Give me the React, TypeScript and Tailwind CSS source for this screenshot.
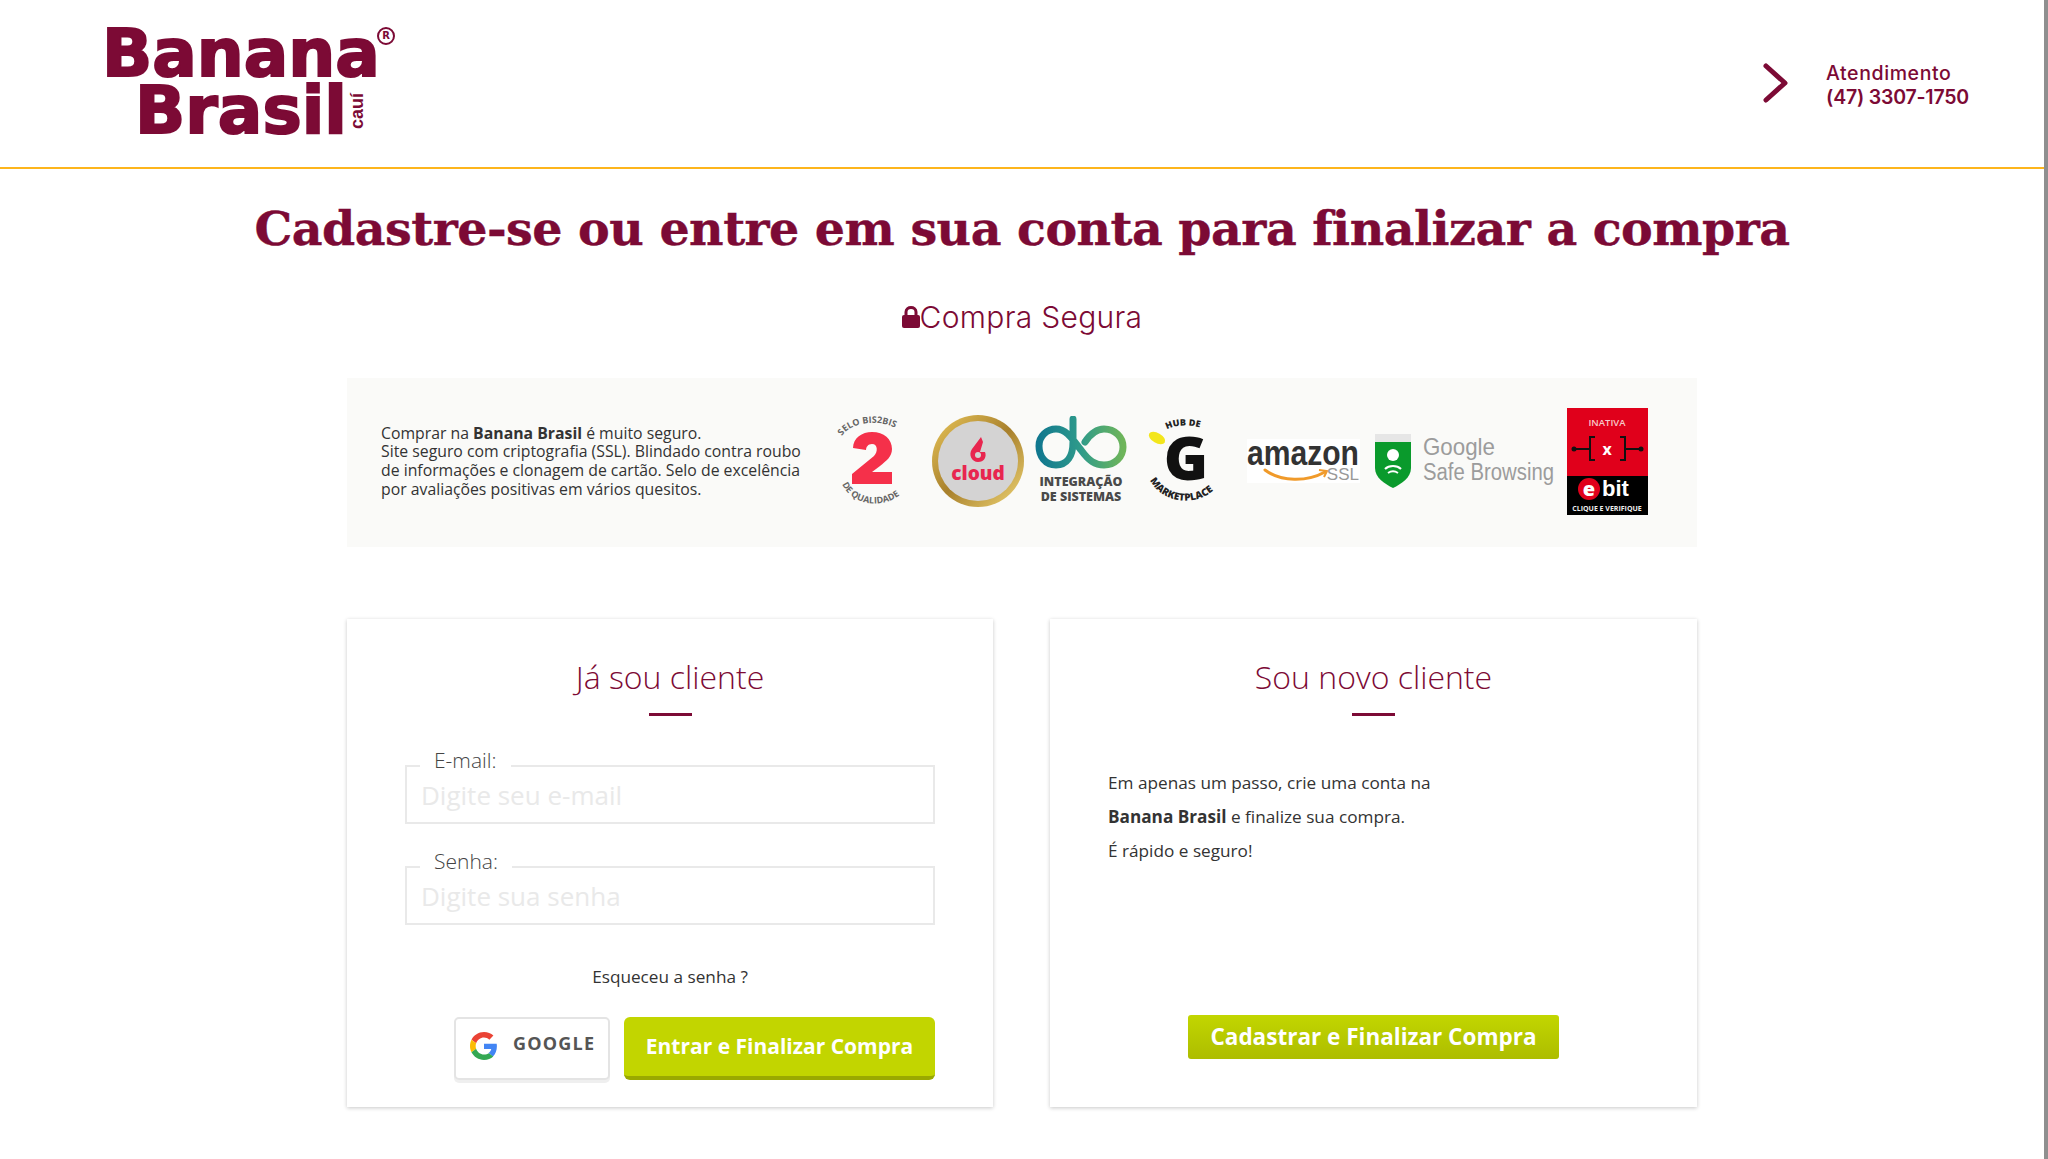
const WINE = "#7c0a35"

const Logo = () => (
  <div className="relative w-[300px] h-[120px] ml-[102px] mt-[25px] text-[#7c0a35] font-['DejaVu_Sans',sans-serif] font-bold [-webkit-text-stroke:2px_#7c0a35]">
    <div className="text-[66px] leading-[57px] whitespace-nowrap">Banana</div>
    <div className="text-[66px] leading-[57px] ml-[33px] whitespace-nowrap">Brasil</div>
    <span className="absolute left-[275px] top-[2px] w-[18px] h-[18px] rounded-full border-2 border-[#7c0a35] flex items-center justify-center text-[10px] leading-none font-bold [-webkit-text-stroke:0px]">R</span>
    <span className="absolute left-[237px] top-[77px] -rotate-90 text-[18px] leading-none font-bold [-webkit-text-stroke:0px] font-['Liberation_Sans',sans-serif]">cauí</span>
  </div>
)

const SeloBadge = () => (
  <svg width="70" height="94" viewBox="0 0 70 94" className="shrink-0 overflow-visible">
    <defs>
      <path id="arcTop" d="M2 22 C12 6 50 2 68 24" />
      <path id="arcBot" d="M2 70 C14 96 54 96 70 70" />
    </defs>
    <text fontSize="9" fontWeight="700" fill="#666" fontFamily="Open Sans, sans-serif"><textPath href="#arcTop">SELO BIS2BIS</textPath></text>
    <path d="M13 34 C13 24 22 18 32 18 C44 18 52 25 52 35 C52 43 46 47 40 52 L32 58 H52 V70 H12 V60 L34 42 C38 38 38 30 32 30 C28 30 26 33 26 36 Z" fill="#f5304a" />
    <text fontSize="9" fontWeight="700" fill="#666" fontFamily="Open Sans, sans-serif"><textPath href="#arcBot">DE QUALIDADE</textPath></text>
  </svg>
)

const CloudBadge = () => (
  <svg width="94" height="92" viewBox="0 0 94 92" className="shrink-0">
    <defs>
      <linearGradient id="gold" x1="0" y1="0" x2="1" y2="1">
        <stop offset="0" stopColor="#e9c65a" />
        <stop offset="0.5" stopColor="#a8802c" />
        <stop offset="1" stopColor="#f0d676" />
      </linearGradient>
    </defs>
    <ellipse cx="47" cy="46" rx="46" ry="46" fill="url(#gold)" />
    <ellipse cx="47" cy="46" rx="40" ry="40" fill="#d4d3d3" />
    <path d="M50 22 L41 34 C37 40 41 47 47 47 C53 47 56 42 54 37 L49 37 L52 27 Z" fill="#e8264f" />
    <circle cx="47" cy="40" r="3" fill="#d4d3d3" />
    <text x="47" y="65" textAnchor="middle" fontSize="19" fontWeight="800" fill="#e8264f" fontFamily="Open Sans, sans-serif">cloud</text>
  </svg>
)

const IntegracaoBadge = () => (
  <svg width="92" height="90" viewBox="0 0 92 90" className="shrink-0">
    <defs>
      <linearGradient id="loop" x1="0" y1="0" x2="1" y2="0">
        <stop offset="0" stopColor="#11788f" />
        <stop offset="0.5" stopColor="#2f9b8a" />
        <stop offset="1" stopColor="#6eb55a" />
      </linearGradient>
    </defs>
    <path d="M38 3 V26 C38 40 32 49 21 49 C10 49 4 40 4 30 C4 20 12 13 21 13 C32 13 38 24 46 34 C54 45 60 49 69 49 C80 49 88 41 88 31 C88 21 80 13 69 13 C60 13 54 20 50 26" fill="none" stroke="url(#loop)" strokeWidth="7" strokeLinecap="round" />
    <text x="46" y="70" textAnchor="middle" fontSize="12.500" fontWeight="800" fill="#4a4a4a" fontFamily="Open Sans, sans-serif">INTEGRAÇÃO</text>
    <text x="46" y="85" textAnchor="middle" fontSize="12.500" fontWeight="800" fill="#4a4a4a" fontFamily="Open Sans, sans-serif">DE SISTEMAS</text>
  </svg>
)

const HubBadge = () => (
  <svg width="78" height="86" viewBox="0 0 78 86" className="shrink-0 overflow-visible">
    <defs>
      <path id="hubTop" d="M15 15 C25 5 50 5 65 15" />
      <path id="hubBot" d="M0 56 C12 90 62 94 80 54" />
    </defs>
    <text fontSize="9" fontWeight="800" fill="#222" fontFamily="Open Sans, sans-serif"><textPath href="#hubTop" startOffset="6">HUB DE</textPath></text>
    <ellipse cx="10" cy="20" rx="9" ry="5" transform="rotate(30 10 20)" fill="#f3e61c" />
    <text x="39" y="62" textAnchor="middle" fontSize="60" fontWeight="800" fill="#111" fontFamily="Open Sans, sans-serif">G</text>
    <text fontSize="10" fontWeight="800" fill="#222" fontFamily="Open Sans, sans-serif"><textPath href="#hubBot" startOffset="7">MARKETPLACE</textPath></text>
  </svg>
)

const AmazonBadge = () => (
  <svg width="113" height="44" viewBox="0 0 113 44" className="shrink-0">
    <rect width="113" height="44" fill="#fff" />
    <text x="0" y="26" fontSize="35" fontWeight="700" fill="#333" textLength="112" lengthAdjust="spacingAndGlyphs" fontFamily="Liberation Sans, sans-serif">amazon</text>
    <path d="M18 31 C34 43 60 43 78 33" fill="none" stroke="#f09a2a" strokeWidth="3" strokeLinecap="round" />
    <path d="M72 31 L80 32 L77 38" fill="none" stroke="#f09a2a" strokeWidth="2" />
    <text x="112" y="41" textAnchor="end" fontSize="17" fill="#999" fontFamily="Liberation Sans, sans-serif">SSL</text>
  </svg>
)

const SafeBrowsingBadge = () => (
  <svg width="180" height="54" viewBox="0 0 180 54" className="shrink-0">
    <path d="M0 2 H36 V34 C36 44 26 50 18 54 C10 50 0 44 0 34 Z" fill="#0a9a2c" />
    <rect width="36" height="8" fill="#e6e6e6" />
    <circle cx="18" cy="21" r="6" fill="#fff" />
    <path d="M10 35 C14 31 22 31 26 35 M13 39 C16 37 20 37 23 39" fill="none" stroke="#fff" strokeWidth="2" />
    <text x="48" y="21" fontSize="24" fill="#9c9c9c" fontFamily="Liberation Sans, sans-serif" textLength="72" lengthAdjust="spacingAndGlyphs">Google</text>
    <text x="48" y="46" fontSize="23" fill="#9c9c9c" fontFamily="Liberation Sans, sans-serif" textLength="131" lengthAdjust="spacingAndGlyphs">Safe Browsing</text>
  </svg>
)

const EbitBadge = () => (
  <svg width="81" height="107" viewBox="0 0 81 107" className="shrink-0">
    <rect width="81" height="68" fill="#e0001b" />
    <rect y="68" width="81" height="39" fill="#000" />
    <text x="40" y="18" textAnchor="middle" fontSize="9.5" fontWeight="600" fill="#f6c9c9" fontFamily="Open Sans, sans-serif">INATIVA</text>
    <path d="M6 41 H24 M57 41 H75 M28 29 H23 V52 H28 M53 29 H58 V52 H53" fill="none" stroke="#111" strokeWidth="2" />
    <circle cx="7" cy="41" r="2.5" fill="#111" />
    <circle cx="74" cy="41" r="2.5" fill="#111" />
    <text x="40" y="47" textAnchor="middle" fontSize="16" fontWeight="700" fill="#fff" fontFamily="Open Sans, sans-serif">x</text>
    <circle cx="22" cy="81" r="11" fill="#e0001b" />
    <text x="22" y="88" textAnchor="middle" fontSize="20" fontWeight="800" fill="#fff" fontFamily="Open Sans, sans-serif">e</text>
    <text x="35" y="88" fontSize="22" fontWeight="800" fill="#fff" fontFamily="Liberation Sans, sans-serif">bit</text>
    <text x="40" y="103" textAnchor="middle" fontSize="7" fontWeight="700" fill="#eee" fontFamily="Open Sans, sans-serif">CLIQUE E VERIFIQUE</text>
  </svg>
)

const GoogleIcon = () => (
  <svg width="28" height="28" viewBox="0 0 48 48" className="shrink-0">
    <path fill="#EA4335" d="M24 9.5c3.5 0 6.700 1.200 9.200 3.600l6.900-6.900C35.900 2.400 30.500 0 24 0 14.600 0 6.500 5.400 2.600 13.200l8 6.200C12.400 13.700 17.700 9.500 24 9.500z" />
    <path fill="#4285F4" d="M46.100 24.500c0-1.600-.1-3.100-.4-4.500H24v9h12.400c-.5 2.900-2.200 5.400-4.700 7l7.600 5.900c4.400-4.100 6.800-10.100 6.800-17.400z" />
    <path fill="#FBBC05" d="M10.500 28.600c-.5-1.400-.8-3-.8-4.600s.3-3.200.8-4.600l-8-6.200C.9 16.500 0 20.100 0 24s.9 7.500 2.600 10.800l7.900-6.200z" />
    <path fill="#34A853" d="M24 48c6.500 0 11.900-2.100 15.900-5.800l-7.600-5.900c-2.100 1.400-4.900 2.300-8.300 2.300-6.300 0-11.600-4.200-13.500-9.900l-8 6.200C6.500 42.600 14.600 48 24 48z" />
  </svg>
)

const CardTitle = ({ children }: { children: string }) => (
  <div className="flex flex-col items-center">
    <h2 className="text-[32px] leading-[40px] font-light text-[#7c0a35]">{children}</h2>
    <div className="w-[43px] h-[3px] mt-[16px] bg-[#7c0a35]" />
  </div>
)

const Field = ({ label, placeholder, type }: { label: string; placeholder: string; type: string }) => (
  <fieldset className="border-2 border-[#e9e9e9] h-[76px] pl-[13px] pr-[14px]">
    <legend className="px-[14px] pb-[12px] text-[21px] leading-[24px] font-light text-[#444] -mb-[4px]">{label}</legend>
    <input
      type={type}
      placeholder={placeholder}
      className="w-full h-[52px] -mt-[11px] ml-[1px] block outline-none bg-transparent text-[26px] font-normal placeholder:text-[#e9e9e9]"
    />
  </fieldset>
)

export default function App() {
  return (
    <div className="flex h-screen overflow-hidden bg-white font-['Open_Sans',sans-serif]">
      <div className="flex-1 min-w-0">
        <header className="h-[169px] border-b-2 border-[#fdb51c] flex justify-between">
          <Logo />
          <div className="flex items-center mr-[75px] pb-[2px] text-[#7c0a35] font-['Inter',sans-serif]">
            <svg width="26" height="40" viewBox="0 0 26 40" fill="none" stroke={WINE} strokeWidth="5" strokeLinecap="round" strokeLinejoin="round">
              <path d="M3 3 L22 20 L3 37" />
            </svg>
            <div className="ml-[37px] mt-[5px] text-[19.5px] leading-[24px] tracking-[-0.2px]">
              <div className="font-medium tracking-[0.6px]">Atendimento</div>
              <div className="font-semibold">(47) 3307-1750</div>
            </div>
          </div>
        </header>

        <h1 className="mt-[27px] text-center text-[47.5px] leading-[64px] font-bold tracking-[-0.5px] text-[#7c0a35] [-webkit-text-stroke:0.4px_#7c0a35] font-['DejaVu_Serif',serif] whitespace-nowrap">
          Cadastre-se ou entre em sua conta para finalizar a compra
        </h1>

        <div className="mt-[37px] flex items-center justify-center text-[30px] leading-[40px] tracking-[0.3px] text-[#7c0a35] font-['Inter',sans-serif] font-light">
          <svg width="18" height="24" viewBox="0 0 18 24" className="shrink-0">
            <path d="M4 11 V7 C4 1 14 1 14 7 V11" fill="none" stroke={WINE} strokeWidth="3" />
            <rect y="10" width="18" height="13" rx="2" fill={WINE} />
          </svg>
          <span>Compra Segura</span>
        </div>

        <section className="mt-[41px] mx-[347px] h-[169px] bg-[#fafaf8] flex items-center pl-[34px] pb-[3px]">
          <p className="w-[459px] shrink-0 text-[15.8px] leading-[18.7px] text-[#333] whitespace-nowrap">
            Comprar na <b>Banana Brasil</b> é muito seguro.<br />
            Site seguro com criptografia (SSL). Blindado contra roubo<br />
            de informações e clonagem de cartão. Selo de excelência<br />
            por avaliações positivas em vários quesitos.
          </p>
          <SeloBadge />
          <div className="ml-[21px]"><CloudBadge /></div>
          <div className="ml-[10px]"><IntegracaoBadge /></div>
          <div className="ml-[20px]"><HubBadge /></div>
          <div className="ml-[22px]"><AmazonBadge /></div>
          <div className="ml-[15px]"><SafeBrowsingBadge /></div>
          <div className="ml-[12px]"><EbitBadge /></div>
        </section>

        <div className="mt-[72px] mx-[347px] grid grid-cols-[646px_647px] gap-[57px]">
          <section className="h-[488px] bg-white shadow-[0_1px_4px_rgba(0,0,0,0.22)] px-[58px] pt-[38px]">
            <CardTitle>Já sou cliente</CardTitle>
            <div className="mt-[32px] flex flex-col gap-[25px]">
              <Field label="E-mail:" placeholder="Digite seu e-mail" type="email" />
              <Field label="Senha:" placeholder="Digite sua senha" type="password" />
            </div>
            <p className="mt-[40px] text-center text-[17.2px] leading-[24px] text-[#333]">Esqueceu a senha ?</p>
            <div className="mt-[28px] flex justify-end gap-[14px]">
              <button className="w-[156px] h-[63px] flex items-start gap-[15px] pl-[14px] pt-[13px] rounded-[5px] border-2 border-[#e4e4e4] bg-white shadow-[0_3px_0_#efefef]">
                <GoogleIcon />
                <span className="-mt-[1px] text-[18px] leading-[24px] font-bold tracking-[1.2px] text-[#555]">GOOGLE</span>
              </button>
              <button className="w-[311px] h-[63px] rounded-[6px] bg-[#c2d500] border-b-[4px] border-[#9aa900] text-[21px] font-bold text-white">
                Entrar e Finalizar Compra
              </button>
            </div>
          </section>

          <section className="h-[488px] bg-white shadow-[0_1px_4px_rgba(0,0,0,0.22)] px-[58px] pt-[38px] flex flex-col">
            <CardTitle>Sou novo cliente</CardTitle>
            <p className="mt-[50px] text-[17.2px] leading-[34.2px] text-[#333]">
              Em apenas um passo, crie uma conta na<br />
              <b>Banana Brasil</b> e finalize sua compra.<br />
              É rápido e seguro!
            </p>
            <div className="mt-[146px] flex justify-center">
              <button className="w-[371px] h-[44px] rounded-[3px] bg-gradient-to-b from-[#c2d600] to-[#adbd00] text-[22.5px] font-bold text-white">
                Cadastrar e Finalizar Compra
              </button>
            </div>
          </section>
        </div>
      </div>
      <div className="w-[4px] shrink-0 bg-[#8f8f8f]" />
    </div>
  )
}
